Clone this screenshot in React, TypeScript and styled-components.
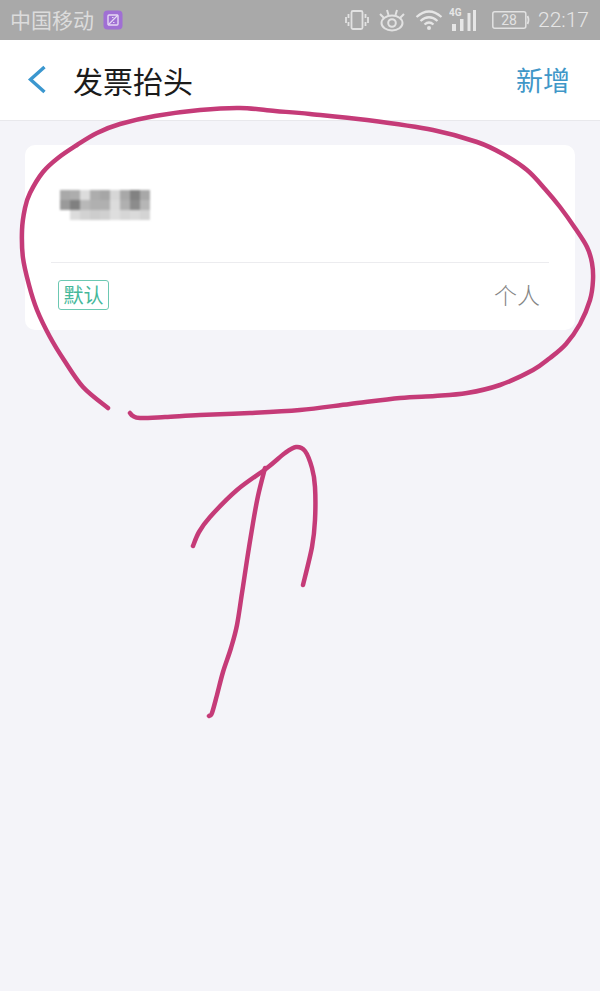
import React from "react";
import styled, { createGlobalStyle } from "styled-components";

const Global = createGlobalStyle`
  html, body { margin: 0; padding: 0; background: #f4f4f9; }
  body { font-family: "Noto Sans CJK SC", "Roboto", sans-serif; }
`;

const Page = styled.div`
  position: relative;
  width: 600px;
  height: 991px;
  overflow: hidden;
  background: #f4f4f9;
`;

const StatusBar = styled.div`
  height: 40px;
  background: #a9a9a9;
  color: #dcdcdc;
  display: flex;
  align-items: center;
  justify-content: space-between;
  padding: 0 11px;
  font-size: 21px;
  box-sizing: border-box;
`;

const StatusGroup = styled.div<{ $gap: number }>`
  display: flex;
  align-items: center;
  gap: ${(p) => p.$gap}px;
`;

const Carrier = styled.span`
  margin-left: -1px;
  margin-top: -2px;
`;

const Clock = styled.span`
  font-family: "Roboto", sans-serif;
  font-size: 21px;
  font-weight: 300;
  color: #e6e6e6;
`;

const NavBar = styled.header`
  height: 81px;
  box-sizing: border-box;
  background: #fff;
  border-bottom: 1px solid #e8e8ec;
  display: flex;
  align-items: center;
  padding: 0 30px 0 26px;
`;

const Title = styled.h1`
  margin: 0 0 0 25px;
  flex: 1;
  font-size: 30px;
  line-height: 40px;
  font-weight: 400;
  color: #1b1b1b;
`;

const AddLink = styled.span`
  font-size: 27px;
  line-height: 40px;
  color: #3f97c8;
`;

const Card = styled.section`
  margin: 24px 25px 0;
  height: 185px;
  background: #fff;
  border-radius: 10px;
  padding: 0 26px;
  box-sizing: border-box;
  display: flex;
  flex-direction: column;
`;

const NameArea = styled.div`
  height: 118px;
  box-sizing: border-box;
  padding: 45px 0 0 9px;
  border-bottom: 1px solid #ececef;
`;

const Mosaic = styled.div`
  display: grid;
  grid-template-columns: repeat(9, 10px);
  grid-auto-rows: 10px;
  width: 90px;
  filter: blur(1.3px);
`;

const Pixel = styled.i<{ $c: string }>`
  display: block;
  background: ${(p) => p.$c};
`;

const CardFooter = styled.div`
  flex: 1;
  display: flex;
  align-items: center;
  justify-content: space-between;
  padding: 0 9px 0 7px;
`;

const Badge = styled.span`
  width: 51px;
  height: 30px;
  box-sizing: border-box;
  border: 1px solid #6cc8b2;
  border-radius: 3px;
  color: #45b89a;
  font-size: 20px;
  line-height: 28px;
  text-align: center;
  white-space: nowrap;
  margin-top: -3px;
`;

const Kind = styled.span`
  font-size: 23px;
  line-height: 30px;
  color: #848484;
  font-weight: 300;
  margin-top: -5px;
`;

const Scribble = styled.svg`
  position: absolute;
  left: 0;
  top: 0;
  pointer-events: none;
`;

const Ink = styled.path`
  fill: none;
  stroke: #c53b78;
  stroke-width: 4.5px;
  stroke-linecap: round;
  stroke-linejoin: round;
`;

const mosaic = [
  "#a9a9a9","#adadad","#dcdcdc","#adadad","#a6a6a6","#d6d6d6","#a8a8a8","#828282","#a8a8a8",
  "#9a9a9a","#808080","#b8b8b8","#b0b0b0","#b0b0b0","#dcdcdc","#b0b0b0","#8c8c8c","#b6b6b6",
  "#ffffff","#dcdcdc","#d2d2d2","#cdcdcd","#d0d0d0","#dedede","#d6d6d6","#dadada","#d4d4d4",
];

type Pt = [number, number];

// Catmull-Rom spline through hand-drawn sample points.
const spline = (pts: Pt[]) => {
  let d = `M${pts[0][0]} ${pts[0][1]}`;
  for (let i = 0; i < pts.length - 1; i++) {
    const p0 = pts[i - 1] || pts[i];
    const p1 = pts[i];
    const p2 = pts[i + 1];
    const p3 = pts[i + 2] || p2;
    const c1x = p1[0] + (p2[0] - p0[0]) / 6;
    const c1y = p1[1] + (p2[1] - p0[1]) / 6;
    const c2x = p2[0] - (p3[0] - p1[0]) / 6;
    const c2y = p2[1] - (p3[1] - p1[1]) / 6;
    d += `C${c1x.toFixed(1)} ${c1y.toFixed(1)} ${c2x.toFixed(1)} ${c2y.toFixed(1)} ${p2[0]} ${p2[1]}`;
  }
  return d;
};

const loop: Pt[] = [
  [108, 408], [83, 387], [64, 360], [50, 337], [37, 310], [29, 285], [23, 258], [22, 230], [25, 208], [30, 193],
  [43, 172], [58, 158], [77, 145], [97, 133], [120, 124], [155, 116], [200, 110], [240, 108], [275, 111], [310, 114],
  [367, 120], [433, 130], [477, 142], [503, 154], [527, 170], [545, 189], [560, 207], [575, 228], [587, 247], [592, 263], [593, 280],
  [590, 300], [580, 324], [566, 344], [550, 358], [533, 370], [500, 385], [467, 393], [435, 396], [400, 398], [350, 404],
  [300, 410], [250, 413], [200, 415], [165, 417], [140, 418], [133, 416], [130, 413],
];

const head: Pt[] = [
  [193, 546], [199, 532], [210, 517], [237, 490], [267, 468], [285, 453], [296, 447], [305, 451], [312, 468], [315, 487],
  [315, 520], [312, 547], [303, 585],
];

const shaft: Pt[] = [
  [265, 468], [258, 496], [253, 523], [247, 560], [242, 593], [237, 625], [231, 648], [223, 672], [217, 695], [212, 713], [209, 716],
];

const App = () => (
  <Page>
    <Global />
    <StatusBar>
      <StatusGroup $gap={9}>
        <Carrier>中国移动</Carrier>
        <svg width="20" height="20" viewBox="0 0 20 20">
          <rect x="0.5" y="0.5" width="19" height="19" rx="4" fill="#a06fd4" />
          <rect x="5" y="5" width="10" height="10" rx="1" fill="none" stroke="#e6d8f4" strokeWidth="1.4" />
          <path d="M5 15 15 5M9 7.5h1.500M10 12.500h1.500" stroke="#e6d8f4" strokeWidth="1.200" />
        </svg>
      </StatusGroup>
      <StatusGroup $gap={6}>
        <svg width="24" height="22" viewBox="0 0 24 22" fill="none" stroke="#e2e2e2" strokeWidth="1.800">
          <rect x="6.500" y="2" width="11" height="18" rx="1.500" />
          <path d="M3.500 5v4M1 8v6M3.500 13v4M20.500 5v4M23 8v6M20.500 13v4" />
        </svg>
        <svg width="28" height="24" viewBox="0 0 28 24" fill="none" stroke="#e2e2e2" strokeWidth="2" style={{ marginLeft: 3 }}>
          <ellipse cx="14" cy="15" rx="10.500" ry="7.500" />
          <circle cx="14" cy="15" r="3.800" />
          <path d="M2 6l4 4M9 2l1.500 5M19 2 17.500 7M26 6l-4 4" />
        </svg>
        <svg width="28" height="22" viewBox="0 0 28 22" fill="none" stroke="#e6e6e6" strokeWidth="2.200" style={{ marginLeft: 3 }}>
          <path d="M1.500 8Q14-3 26.500 8M5.500 12Q14 4.500 22.500 12M9.500 15.500Q14 11.500 18.500 15.500" />
          <circle cx="14" cy="19" r="2" fill="#e6e6e6" stroke="none" />
        </svg>
        <svg width="28" height="26" viewBox="0 0 28 26" fill="#e6e6e6">
          <text x="0" y="9" fontSize="10" fontWeight="700" fontFamily="Roboto, sans-serif">4G</text>
          <rect x="3" y="17" width="4" height="7" />
          <rect x="11" y="12" width="3.500" height="12" />
          <rect x="18.500" y="6" width="3" height="18" />
          <rect x="24" y="3" width="3" height="21" />
        </svg>
        <svg width="38" height="20" viewBox="0 0 38 20" style={{ marginLeft: 9, marginRight: 2 }}>
          <rect x="0.800" y="1.800" width="33" height="16.400" rx="2" fill="none" stroke="#e2e2e2" strokeWidth="1.500" />
          <path d="M35.500 6q2 4 0 8" fill="none" stroke="#e2e2e2" strokeWidth="1.800" />
          <text x="17" y="15" fontSize="14" textAnchor="middle" fill="#e2e2e2" fontFamily="Roboto, sans-serif">28</text>
        </svg>
        <Clock>22:17</Clock>
      </StatusGroup>
    </StatusBar>
    <NavBar>
      <svg width="22" height="30" viewBox="0 0 22 30" fill="none" stroke="#3b97cf" strokeWidth="3.400">
        <path d="M18.500 2 4.500 14.500 18.500 27" />
      </svg>
      <Title>发票抬头</Title>
      <AddLink>新增</AddLink>
    </NavBar>
    <Card>
      <NameArea>
        <Mosaic>
          {mosaic.map((c, i) => (
            <Pixel key={i} $c={c} />
          ))}
        </Mosaic>
      </NameArea>
      <CardFooter>
        <Badge>默认</Badge>
        <Kind>个人</Kind>
      </CardFooter>
    </Card>
    <Scribble width="600" height="991" viewBox="0 0 600 991">
      <Ink d={spline(loop)} />
      <Ink d={spline(head)} />
      <Ink d={spline(shaft)} />
    </Scribble>
  </Page>
);

export default App;
